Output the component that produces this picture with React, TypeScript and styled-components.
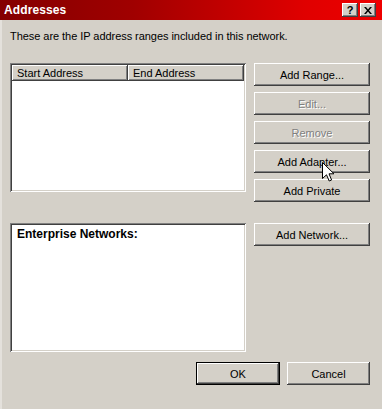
import React from "react";
import styled, { createGlobalStyle } from "styled-components";

const Global = createGlobalStyle`
  html, body { margin: 0; padding: 0; background: #d4d0c8; }
  body { font-family: "Liberation Sans", Arial, sans-serif; }
`;

const Window = styled.div`
  position: relative;
  width: 382px;
  height: 409px;
  background: #d4d0c8;
  display: flex;
  flex-direction: column;
  overflow: hidden;
  font-family: "Liberation Sans", Arial, sans-serif;
  font-size: 11px;
  color: #000;
`;

const TitleBar = styled.div`
  height: 20px;
  flex-shrink: 0;
  display: flex;
  align-items: center;
  justify-content: space-between;
  padding: 0 6px 0 4px;
  background: linear-gradient(to right, #840000 0%, #a00000 35%, #e00000 80%, #ee0000 100%);
`;

const TitleText = styled.span`
  color: #fff;
  font-weight: bold;
  font-size: 12px;
  letter-spacing: 0.1px;
`;

const TitleButtons = styled.div`
  display: flex;
  gap: 2px;
`;

const CaptionButton = styled.div`
  width: 16px;
  height: 14px;
  box-sizing: border-box;
  background: #d4d0c8;
  box-shadow: inset -1px -1px #404040, inset 1px 1px #fff, inset -2px -2px #808080;
  display: flex;
  align-items: center;
  justify-content: center;
  font-weight: bold;
  font-size: 11px;
  line-height: 14px;
`;

const Body = styled.div`
  flex: 1;
  display: flex;
  flex-direction: column;
  padding: 0 12px 0 10px;
  box-shadow: inset 2px 0 #e4e1dc;
`;

const Intro = styled.div`
  margin-top: 10px;
  line-height: 13px;
  height: 13px;
  letter-spacing: -0.05px;
`;

const Section = styled.div<{ $top: number }>`
  display: flex;
  align-items: flex-start;
  gap: 8px;
  margin-top: ${(p) => p.$top}px;
`;

const ListBox = styled.div`
  width: 236px;
  height: 129px;
  flex-shrink: 0;
  box-sizing: border-box;
  padding: 2px;
  background: #fff;
  box-shadow: inset 1px 1px #808080, inset -1px -1px #fff, inset 2px 2px #404040, inset -2px -2px #d4d0c8;
  display: flex;
  flex-direction: column;
`;

const HeaderRow = styled.div`
  display: flex;
  height: 16px;
`;

const HeaderCell = styled.div<{ $w?: number }>`
  ${(p) => (p.$w ? `width: ${p.$w}px;` : "flex: 1;")}
  box-sizing: border-box;
  background: #d4d0c8;
  box-shadow: inset -1px -1px #404040, inset 1px 1px #fff, inset -2px -2px #808080;
  padding-left: 5px;
  line-height: 16px;
  white-space: nowrap;
`;

const ListLabel = styled.div`
  font-weight: bold;
  font-size: 12px;
  padding: 2px 0 0 5px;
  line-height: 14px;
`;

const ButtonColumn = styled.div`
  display: flex;
  flex-direction: column;
  gap: 6px;
`;

const Button = styled.button<{ $w?: number; $default?: boolean }>`
  width: ${(p) => p.$w ?? 116}px;
  height: 23px;
  flex-shrink: 0;
  box-sizing: border-box;
  padding: 0;
  margin: 0;
  font-family: inherit;
  font-size: 11px;
  color: #000;
  background: #d4d0c8;
  border: ${(p) => (p.$default ? "1px solid #000" : "none")};
  box-shadow: inset -1px -1px #404040, inset 1px 1px #fff, inset -2px -2px #808080, inset 2px 2px #d4d0c8;
  display: flex;
  align-items: center;
  justify-content: center;
  &:disabled {
    color: #808080;
    text-shadow: 1px 1px #fff;
  }
`;

const Footer = styled.div`
  display: flex;
  justify-content: flex-end;
  gap: 7px;
  margin-top: 10px;
`;

const Cursor = styled.svg`
  position: absolute;
  left: 322px;
  top: 162px;
`;

export default function App() {
  return (
    <>
      <Global />
      <Window>
        <TitleBar>
          <TitleText>Addresses</TitleText>
          <TitleButtons>
            <CaptionButton>?</CaptionButton>
            <CaptionButton>
              <svg width="8" height="7" viewBox="0 0 8 7">
                <path d="M0 0 L2 0 L4 2.5 L6 0 L8 0 L5 3.5 L8 7 L6 7 L4 4.5 L2 7 L0 7 L3 3.5 Z" fill="#000" />
              </svg>
            </CaptionButton>
          </TitleButtons>
        </TitleBar>
        <Body>
          <Intro>These are the IP address ranges included in this network.</Intro>
          <Section $top={20}>
            <ListBox>
              <HeaderRow>
                <HeaderCell $w={116}>Start Address</HeaderCell>
                <HeaderCell>End Address</HeaderCell>
              </HeaderRow>
            </ListBox>
            <ButtonColumn>
              <Button>Add Range...</Button>
              <Button disabled>Edit...</Button>
              <Button disabled>Remove</Button>
              <Button>Add Adapter...</Button>
              <Button>Add Private</Button>
            </ButtonColumn>
          </Section>
          <Section $top={21}>
            <ListBox>
              <ListLabel>Enterprise Networks:</ListLabel>
            </ListBox>
            <ButtonColumn>
              <Button>Add Network...</Button>
            </ButtonColumn>
          </Section>
          <Footer>
            <Button $w={84} $default>OK</Button>
            <Button $w={83}>Cancel</Button>
          </Footer>
        </Body>
        <Cursor width="13" height="21" viewBox="0 0 13 21">
          <path d="M0.5 0.5 L0.5 16.5 L4.5 12.8 L7.2 19 L9.6 18 L7 11.8 L12 11.8 Z" fill="#fff" stroke="#000" strokeWidth="1" />
        </Cursor>
      </Window>
    </>
  );
}
